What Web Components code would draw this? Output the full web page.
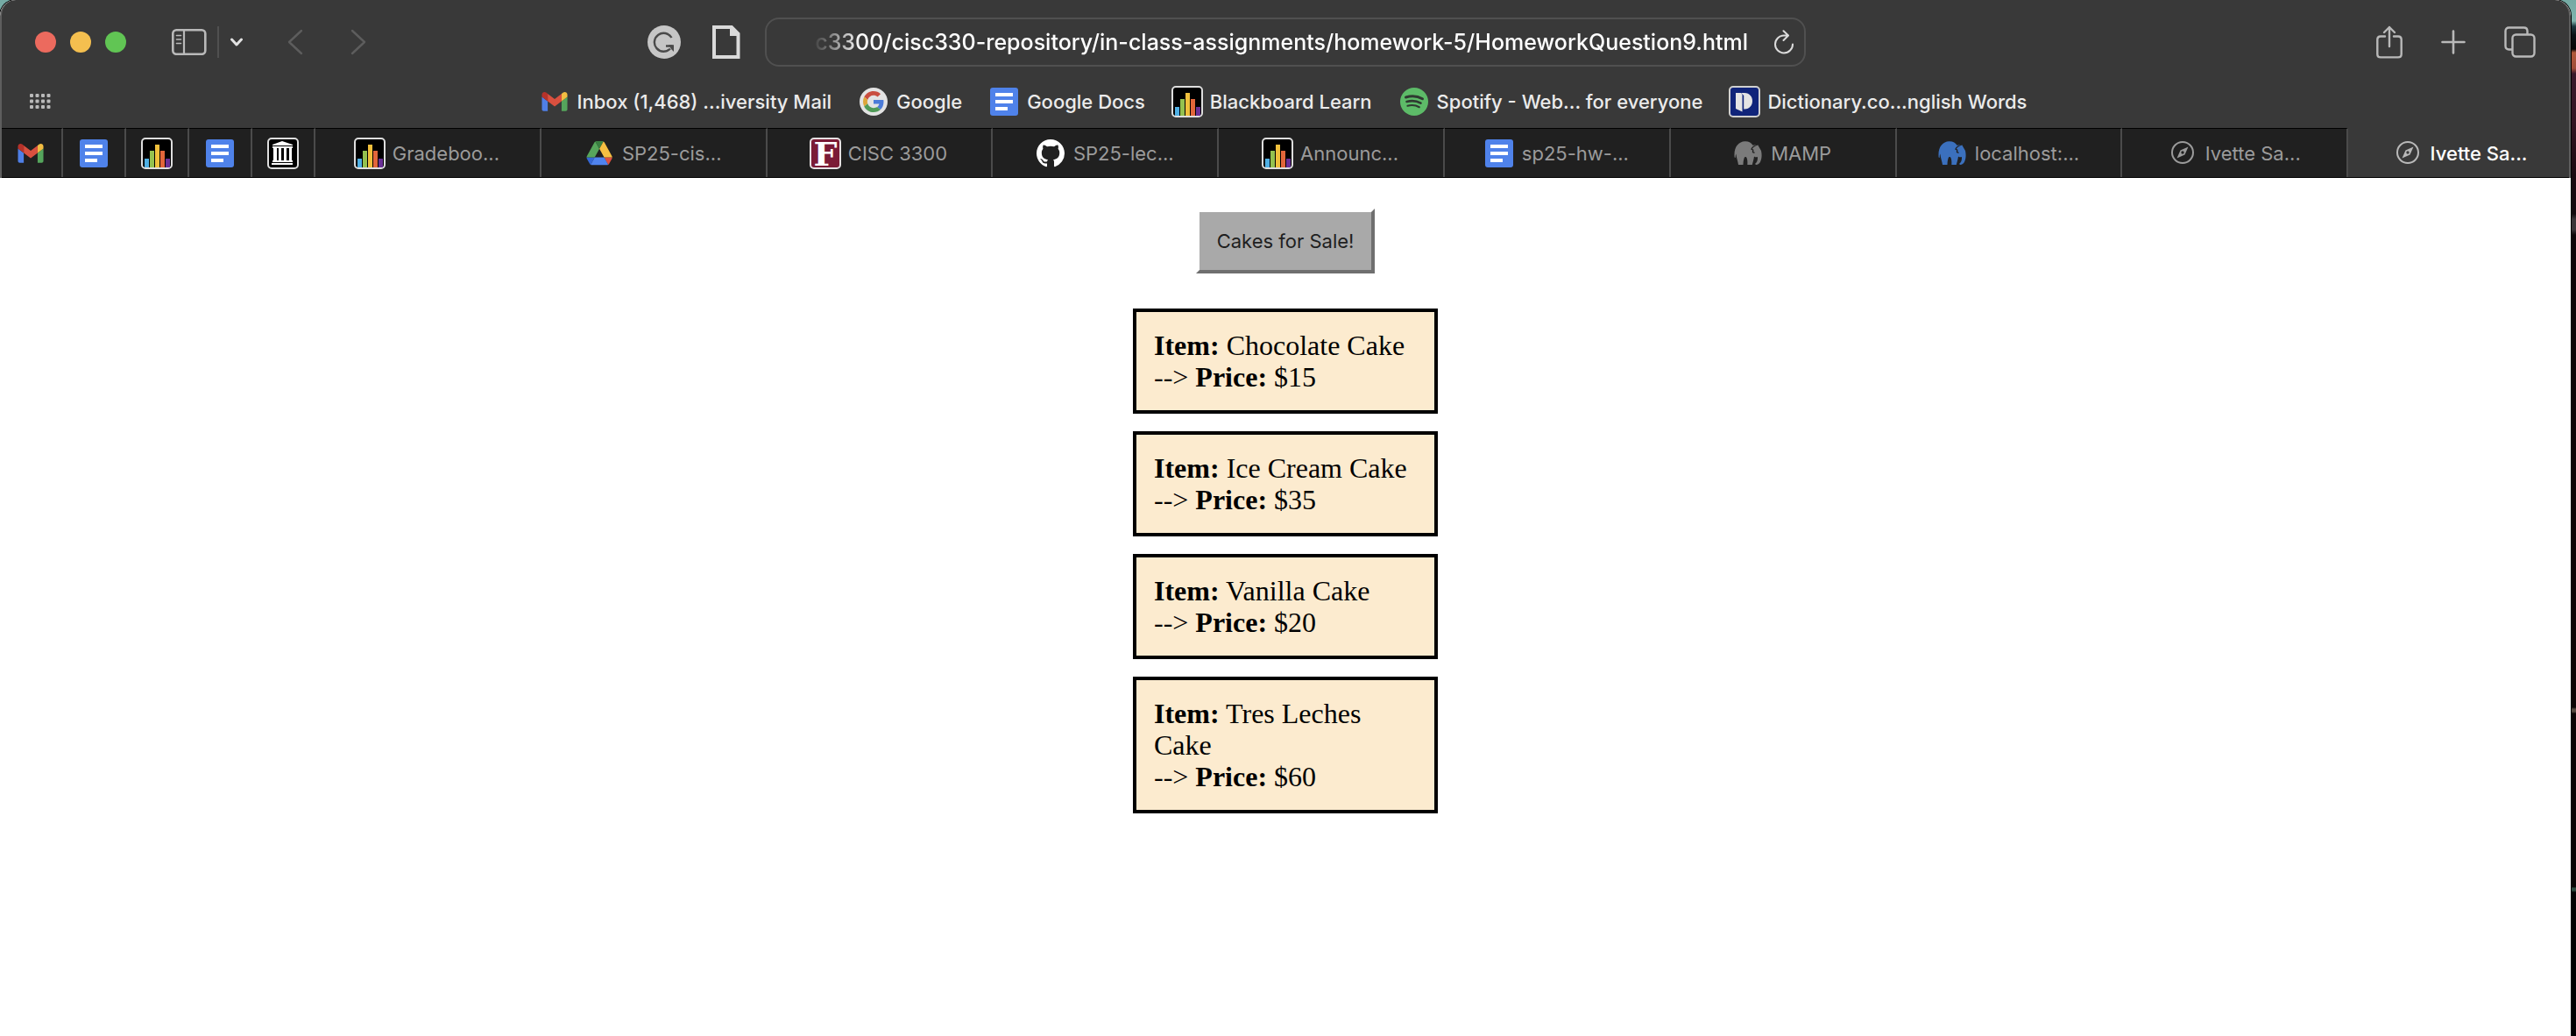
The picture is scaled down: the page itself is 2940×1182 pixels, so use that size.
<!DOCTYPE html>
<html lang="en">
<head>
<meta charset="utf-8">
<title>Ivette Sa...</title>
<style>
  html { height: 100%; }
  body {
    margin: 0;
    min-height: 100%;
    display: flex;
    overflow-x: hidden;
    background: linear-gradient(to bottom,
      #74aaa4 0, #7fb3ac 24px, #1d3a40 30px, #0a1216 40px, #050505 56px,
      #b0583a 60px, #a04c38 78px, #3a1a2c 84px, #331522 140px, #1a0a10 200px,
      #120a0e 244px, #3a3538 250px, #3a3538 262px, #0d0608 268px, #0c0404 807px,
      #55483e 809px, #55483e 812px, #0c0404 814px, #080404 1012px, #2c4a3e 1013px,
      #2c4a3e 1016px, #040303 1018px, #000 1100px);
  }
</style>
</head>
<body>
<browser-window>
  <tool-bar slot="chrome"></tool-bar>
  <favorites-bar slot="chrome">
    <bookmark-link icon="gmail">Inbox (1,468) ...iversity Mail</bookmark-link>
    <bookmark-link icon="google">Google</bookmark-link>
    <bookmark-link icon="docs">Google Docs</bookmark-link>
    <bookmark-link icon="board">Blackboard Learn</bookmark-link>
    <bookmark-link icon="spotify">Spotify - Web... for everyone</bookmark-link>
    <bookmark-link icon="dictionary">Dictionary.co...nglish Words</bookmark-link>
  </favorites-bar>
  <tab-bar slot="chrome">
    <browser-tab pinned icon="gmail" label="Mail"></browser-tab>
    <browser-tab pinned icon="docs" label="Docs"></browser-tab>
    <browser-tab pinned icon="board" label="Blackboard"></browser-tab>
    <browser-tab pinned icon="docs" label="Docs"></browser-tab>
    <browser-tab pinned icon="archive" label="Archive"></browser-tab>
    <browser-tab icon="board">Gradeboo...</browser-tab>
    <browser-tab icon="drive">SP25-cis...</browser-tab>
    <browser-tab icon="fordham">CISC 3300</browser-tab>
    <browser-tab icon="github">SP25-lec...</browser-tab>
    <browser-tab icon="board">Announc...</browser-tab>
    <browser-tab icon="docs">sp25-hw-...</browser-tab>
    <browser-tab icon="elephant" style="--icon-color:#7b7b7b">MAMP</browser-tab>
    <browser-tab icon="elephant" style="--icon-color:#3b70bd">localhost:...</browser-tab>
    <browser-tab icon="compass" style="--icon-color:#9b9b9b">Ivette Sa...</browser-tab>
    <browser-tab icon="compass" active style="--icon-color:#b9b9b9">Ivette Sa...</browser-tab>
  </tab-bar>
  <cake-shop>
    <sale-button slot="action">Cakes for Sale!</sale-button>
    <cake-card price="$15">Chocolate Cake</cake-card>
    <cake-card price="$35">Ice Cream Cake</cake-card>
    <cake-card price="$20">Vanilla Cake</cake-card>
    <cake-card price="$60">Tres Leches Cake</cake-card>
  </cake-shop>
</browser-window>

<script>
const ICONS = {
  gmail: [32, 32, `<svg viewBox="0 0 32 32"><g transform="translate(1.500 5) scale(.33) translate(-52 -42)">
    <path fill="#4f7fe6" d="M58 108h14V74L52 59v43c0 3.320 2.690 6 6 6"/><path fill="#55a55c" d="M120 108h14c3.320 0 6-2.690 6-6V59l-20 15"/>
    <path fill="#f2bd42" d="M120 48v26l20-15v-8c0-7.420-8.470-11.650-14.400-7.200"/><path fill="#d9503f" d="M72 74V48l24 18 24-18v26L96 92"/>
    <path fill="#b5322a" d="M52 51v8l20 15V48l-5.600-4.200c-5.940-4.450-14.400-.220-14.400 7.200"/></g></svg>`],
  docs: [32, 32, `<svg viewBox="0 0 32 32"><rect width="32" height="32" rx="3" fill="#4f82ea"/><path fill="#fff" d="M6 6h20v4H6zM6 14h20v4H6zM6 22h14v4H6z"/></svg>`],
  board: [36, 36, `<svg viewBox="0 0 36 36"><rect x="1" y="1" width="34" height="34" rx="4" fill="#000" stroke="#dedede" stroke-width="2"/>
    <path fill="#4fb0e4" d="M4 24h5v10H4z"/><path fill="#94c14f" d="M10 15h5v19h-5z"/><path fill="#f0c03c" d="M16 8h5v26h-5z"/><path fill="#e2663a" d="M22 15h5v19h-5z"/><path fill="#6a3096" d="M28 24h5v10h-5z"/></svg>`],
  archive: [36, 36, `<svg viewBox="0 0 36 36"><rect x="1" y="1" width="34" height="34" rx="4" fill="#000" stroke="#dedede" stroke-width="2"/>
    <path fill="#fff" d="M17 4 29 8v1H6V8zM6 10h23v2H6zM7 12h4v14H7zM13 12h3v14h-3zM19 12h3v14h-3zM25 12h3v14h-3zM6 26h23v2H6zM5 29h24v2H5z"/></svg>`],
  google: [32, 32, `<svg viewBox="0 0 32 32"><circle cx="16" cy="16" r="16" fill="#e3e3e3"/><g transform="translate(4 4) scale(.5)">
    <path fill="#c94d3f" d="M24 9.500c3.540 0 6.710 1.220 9.210 3.600l6.850-6.850C35.900 2.380 30.470 0 24 0 14.620 0 6.510 5.380 2.560 13.220l7.980 6.190C12.430 13.720 17.740 9.500 24 9.500z"/>
    <path fill="#4b7bd8" d="M46.980 24.550c0-1.570-.150-3.090-.380-4.550H24v9.020h12.940c-.580 2.960-2.260 5.480-4.780 7.180l7.730 6c4.510-4.180 7.090-10.360 7.090-17.650z"/>
    <path fill="#dca63a" d="M10.530 28.590c-.480-1.450-.760-2.990-.760-4.590s.270-3.140.760-4.590l-7.980-6.190C.920 16.460 0 20.120 0 24c0 3.880.920 7.540 2.560 10.780l7.970-6.190z"/>
    <path fill="#4f9a57" d="M24 48c6.480 0 11.930-2.130 15.890-5.810l-7.730-6c-2.150 1.450-4.920 2.300-8.160 2.300-6.260 0-11.570-4.220-13.470-9.910l-7.980 6.190C6.510 42.620 14.620 48 24 48z"/></g></svg>`],
  spotify: [32, 32, `<svg viewBox="0 0 32 32"><circle cx="16" cy="16" r="16" fill="#5dbb68"/><g fill="none" stroke="#2f3a31" stroke-linecap="round"><path stroke-width="3" d="M6.500 11c6-1.800 13.500-1.300 19 1.800"/><path stroke-width="2.600" d="M7.500 16c5.500-1.500 11.500-.900 16 1.700"/><path stroke-width="2.200" d="M8.500 20.700c4.500-1.200 9.500-.700 13.300 1.500"/></g></svg>`],
  dictionary: [36, 36, `<svg viewBox="0 0 36 36"><rect x="1" y="1" width="34" height="34" rx="4" fill="#10247a" stroke="#d0d0d0" stroke-width="2"/><path fill="#e4e4e4" d="M8 8h6l1.500 2v19.500L8 26z"/><path fill="#e4e4e4" d="M14 8h4c12 0 12 18.500 0 18.500h-.8V11z"/></svg>`],
  drive: [32, 28, `<svg viewBox="0 0 32 28"><g transform="translate(1.500 0) scale(.335 .350)">
    <path fill="#3467d6" d="m6.600 66.850 3.850 6.650c.8 1.400 1.950 2.500 3.300 3.300l13.750-23.800H0c0 1.550.4 3.100 1.200 4.500z"/><path fill="#57a55b" d="M43.650 25 29.900 1.200c-1.350.8-2.500 1.900-3.300 3.300L1.200 48.500A9.060 9.060 0 0 0 0 53h27.500z"/>
    <path fill="#dc5040" d="M73.550 76.800c1.350-.8 2.500-1.900 3.300-3.300l1.600-2.750L86.100 57.500c.8-1.400 1.200-2.950 1.200-4.500H59.800l5.850 11.500z"/><path fill="#3a7f41" d="M43.650 25 57.400 1.200C56.050.4 54.500 0 52.900 0H34.400c-1.600 0-3.150.45-4.500 1.200z"/>
    <path fill="#4f83ee" d="M59.800 53H27.500L13.750 76.800c1.350.8 2.900 1.200 4.500 1.200h50.800c1.600 0 3.150-.45 4.500-1.200z"/><path fill="#f5bf42" d="m73.400 26.500-12.700-22c-.8-1.400-1.950-2.500-3.300-3.300L43.650 25 59.800 53h27.450c0-1.550-.4-3.100-1.200-4.500z"/></g></svg>`],
  fordham: [36, 36, `<svg viewBox="0 0 36 36"><rect x="1" y="1" width="34" height="34" rx="4" fill="#7b1b36" stroke="#e6e0e2" stroke-width="2"/><text x="18" y="32" text-anchor="middle" font-family="DejaVu Serif, serif" font-weight="700" font-size="38" fill="#fff">F</text></svg>`],
  github: [32, 32, `<svg viewBox="0 0 16 16"><path fill="#fff" d="M8 0C3.580 0 0 3.580 0 8c0 3.540 2.290 6.530 5.470 7.590.4.070.550-.170.550-.380 0-.190-.010-.820-.010-1.490-2.010.370-2.530-.490-2.690-.940-.090-.230-.480-.940-.820-1.130-.280-.150-.680-.520-.010-.530.630-.010 1.080.580 1.230.820.720 1.210 1.870.870 2.330.660.070-.520.280-.870.510-1.070-1.780-.2-3.640-.890-3.640-3.950 0-.870.310-1.590.820-2.150-.080-.2-.360-1.020.080-2.120 0 0 .670-.210 2.200.820.640-.180 1.320-.270 2-.270s1.360.090 2 .270c1.530-1.040 2.200-.820 2.200-.820.440 1.100.160 1.920.080 2.120.510.560.820 1.270.820 2.150 0 3.070-1.870 3.750-3.650 3.950.290.250.540.730.540 1.480 0 1.070-.010 1.930-.010 2.200 0 .210.150.460.550.380A8.013 8.013 0 0 0 16 8c0-4.420-3.580-8-8-8z"/></svg>`],
  elephant: [32, 28, `<svg viewBox="0 0 32 28"><path fill="var(--icon-color)" d="M.6 18.500C-.5 7 5 .5 12.500.2c4.500-.1 7.500 1.600 9 4.600L27 4l4 7c1 4 .8 9-.9 12.500-1.100 2.300-3 3.700-5.300 3.500l-.6-1.200c2.300-1.600 3-4.300 2.800-7.800-1.500.6-3 .3-4-.6-.4 3.500-1.500 6.500-2.200 9.600h-5.500c.2-3 .2-6.500-1.300-8.800-1.300-.5-2 .1-2.400 1.300-.9 2.500-1 5-1.100 7.500H5C4.500 23 3 20 2.300 14.500 1.800 16 1.600 17.500 1.800 19z"/><path fill="none" stroke="#202020" stroke-width="1.300" d="M27 4c-4 1.500-6.500 3.500-7 5.200l1.800 1-.3 2.300 2 .8"/></svg>`],
  compass: [32, 28, `<svg viewBox="0 0 32 28"><circle cx="16" cy="13" r="12" fill="none" stroke="var(--icon-color)" stroke-width="2"/><path fill="var(--icon-color)" fill-rule="evenodd" d="m22.500 6.500-4 9-9 4 4-9zM16 11.300a1.700 1.700 0 1 0 0 3.400 1.700 1.700 0 0 0 0-3.400z"/></svg>`],
  sidebar: [40, 30, `<svg viewBox="0 0 40 30" fill="none" stroke="#b9b9b9"><rect x="1.300" y="1.300" width="37" height="27.500" rx="4" stroke-width="2.600"/><path stroke-width="2.200" d="M14 1v28"/><path stroke-width="1.600" stroke-linecap="round" d="M5.500 7.500h5M5.500 12h5M5.500 16.500h5"/></svg>`],
  caret: [16, 10, `<svg viewBox="0 0 16 10"><path fill="none" stroke="#e2e2e2" stroke-width="3" stroke-linecap="round" stroke-linejoin="round" d="m2.500 2 5.500 6 5.500-6"/></svg>`],
  back: [18, 30, `<svg viewBox="0 0 18 30"><path fill="none" stroke="#5d5d5d" stroke-width="2.400" stroke-linecap="round" stroke-linejoin="round" d="M16 2 2 15l14 13"/></svg>`],
  forward: [18, 30, `<svg viewBox="0 0 18 30"><path fill="none" stroke="#5d5d5d" stroke-width="2.400" stroke-linecap="round" stroke-linejoin="round" d="m2 2 14 13L2 28"/></svg>`],
  grammarly: [38, 38, `<svg viewBox="0 0 38 38"><circle cx="19" cy="19" r="19" fill="#c6c6c6"/><path fill="none" stroke="#4a4a4a" stroke-width="2.400" d="M27.500 14A10.500 10.500 0 1 0 26 26.500M21 23.500h7.500"/><path fill="#4a4a4a" d="M24 22.300h6V30l-2.500-2.500z"/></svg>`],
  page: [32, 38, `<svg viewBox="0 0 32 38"><path fill="none" stroke="#dadada" stroke-width="4" d="M2 2h20l7.500 7.500V36H2z"/><path fill="#dadada" d="M20 2v10h10z"/></svg>`],
  reload: [22, 28, `<svg viewBox="0 0 22 28"><path fill="none" stroke="#dcdcdc" stroke-width="2" stroke-linecap="round" stroke-linejoin="round" d="M15.500 6.500H11a10 10 0 1 0 10 10M10.500 1.300l5.500 5.200-5.500 5.500"/></svg>`],
  share: [30, 38, `<svg viewBox="0 0 30 38"><path fill="none" stroke="#b9b9b9" stroke-width="2.400" stroke-linecap="round" stroke-linejoin="round" d="M10 12.500H5c-2.500 0-3.700 1.200-3.700 3.700v16.500c0 2.500 1.200 3.700 3.700 3.700h20c2.500 0 3.700-1.200 3.700-3.700V16.200c0-2.500-1.200-3.700-3.700-3.700h-5M15 24V2M9 8l6-6 6 6"/></svg>`],
  plus: [28, 28, `<svg viewBox="0 0 28 28"><path stroke="#b9b9b9" stroke-width="2.600" stroke-linecap="round" d="M14 1.500v25M1.500 14h25"/></svg>`],
  overview: [36, 36, `<svg viewBox="0 0 36 36" fill="none" stroke="#b9b9b9" stroke-width="2.400"><rect x="9.500" y="9.500" width="25" height="25" rx="4"/><path d="M9 26.500H5.500c-2.500 0-4-1.500-4-4v-17c0-2.500 1.500-4 4-4h17c2.500 0 4 1.500 4 4V9"/></svg>`],
  dots: [24, 18, `<svg viewBox="0 0 24 18" fill="#b9b9b9">${[0, 6.500, 13, 19.500].map(x => [0, 6.500, 13].map(y => `<rect x="${x}" y="${y}" width="4" height="4" rx="1"/>`).join('')).join('')}</svg>`]
};

function define(name, css, html, setup) {
  const template = document.createElement('template');
  template.innerHTML = `<style>*,:host{box-sizing:border-box}${css}</style>${html}`;
  customElements.define(name, class extends HTMLElement {
    connectedCallback() {
      if (this.shadowRoot) return;
      const root = this.attachShadow({ mode: 'open' });
      root.append(template.content.cloneNode(true));
      if (setup) setup(this, root);
    }
  });
}

const BUTTON = 'button{display:flex;align-items:center;justify-content:center;margin:0;padding:0;border:0;background:none;font:inherit;color:inherit}';

define('ui-icon', ':host{display:block;flex:none}span,svg{display:block;width:100%;height:100%}', '<span></span>', (host, root) => {
  const [w, h, svg] = ICONS[host.getAttribute('name')];
  host.style.width = w + 'px';
  host.style.height = h + 'px';
  root.querySelector('span').innerHTML = svg;
});

define('browser-window', `
  :host{display:flex;flex-direction:column;flex:1;min-width:0;margin-right:6px;border-radius:18px 18px 0 0;overflow:hidden;background:#fff;box-shadow:0 0 0 1px #000}
  header{background:#393939;border:solid #5e5e5e;border-width:0 2px;border-radius:18px 18px 0 0;overflow:hidden;font-family:Inter,sans-serif}
  main{flex:1}`,
  '<header><slot name="chrome"></slot></header><main><slot></slot></main>');

define('traffic-lights', `
  :host{display:flex;gap:16px}${BUTTON}
  button{width:24px;height:24px;border-radius:50%}
  .close{background:#ec6a5e}.min{background:#f4bf4f}.max{background:#61c554}`,
  '<button class="close" aria-label="Close"></button><button class="min" aria-label="Minimize"></button><button class="max" aria-label="Zoom"></button>');

define('address-field', `
  :host{display:flex;align-items:center;min-width:0;height:56px;padding:0 12px 0 52px;gap:30px;border:2px solid #505050;border-radius:16px}
  ${BUTTON}
  input{flex:1;min-width:0;padding:0;border:0;outline:0;background:none;color:#fff;font:500 25px/32px Inter,sans-serif;text-align:right;
    -webkit-mask-image:linear-gradient(to right,transparent,#000 56px);mask-image:linear-gradient(to right,transparent,#000 56px)}`,
  '<input type="text" aria-label="Address" value="c3300/cisc330-repository/in-class-assignments/homework-5/HomeworkQuestion9.html"><button aria-label="Reload"><ui-icon name="reload"></ui-icon></button>');

define('tool-bar', `
  :host{display:grid;grid-template-columns:1fr minmax(0,1188px) 1fr;align-items:center;gap:28px;height:96px;padding:0 38px}
  ${BUTTON}
  .side{display:flex;align-items:center}
  .panel{margin-left:52px}
  .divider{width:2px;height:36px;margin:0 12px;background:#505050}
  .nav{display:flex;gap:54px;margin-left:50px}
  .extensions{display:flex;gap:36px;margin-left:auto}
  .actions{justify-content:flex-end;gap:44px}`,
  `<div class="side"><traffic-lights></traffic-lights>
    <button class="panel" aria-label="Sidebar"><ui-icon name="sidebar"></ui-icon></button><span class="divider"></span>
    <button aria-label="Tab groups"><ui-icon name="caret"></ui-icon></button>
    <div class="nav"><button aria-label="Back"><ui-icon name="back"></ui-icon></button><button aria-label="Forward"><ui-icon name="forward"></ui-icon></button></div>
    <div class="extensions"><button aria-label="Grammarly"><ui-icon name="grammarly"></ui-icon></button><button aria-label="Page"><ui-icon name="page"></ui-icon></button></div></div>
  <address-field></address-field>
  <div class="side actions"><button aria-label="Share"><ui-icon name="share"></ui-icon></button><button aria-label="New tab"><ui-icon name="plus"></ui-icon></button><button aria-label="Tab overview"><ui-icon name="overview"></ui-icon></button></div>`);

define('favorites-bar', `
  :host{display:grid;grid-template-columns:1fr auto 1fr;align-items:center;height:50px;padding:0 36px 10px 32px}
  ${BUTTON}
  nav{display:flex;gap:32px}`,
  '<div><button aria-label="Favorites"><ui-icon name="dots"></ui-icon></button></div><nav><slot></slot></nav>');

const showIcon = (host, root) => {
  root.querySelector('.icon').innerHTML = `<ui-icon name="${host.getAttribute('icon')}"></ui-icon>`;
};

define('bookmark-link', `
  :host{display:block}
  a{display:flex;align-items:center;gap:10px;color:#ebebeb;text-decoration:none;white-space:nowrap;font-size:22px;line-height:28px;font-weight:500}
  .icon{display:flex;align-items:center;justify-content:center;width:32px;height:36px}`,
  '<a href="#"><span class="icon"></span><span><slot></slot></span></a>', showIcon);

define('tab-bar', ':host{display:flex;height:57px;margin-left:-2px;margin-right:-6px;border-bottom:1px solid #000}', '<slot></slot>');

define('browser-tab', `
  :host{display:block;flex:1 1 0;min-width:0;border-top:1px solid #000;border-right:2px solid #4b4b4b;background:#202020;color:#9b9b9b}
  :host([pinned]){flex:0 0 72px}
  :host([active]){border-color:transparent;background:none;color:#fff;font-weight:500}
  ${BUTTON}
  button{width:100%;height:100%;gap:10px;white-space:nowrap;font-size:22px;line-height:28px}
  .icon{display:flex;justify-content:center;width:32px}
  :host([pinned]) .text{display:none}`,
  '<button role="tab"><span class="icon"></span><span class="text"><slot></slot></span></button>',
  (host, root) => {
    showIcon(host, root);
    if (host.hasAttribute('label')) root.querySelector('button').setAttribute('aria-label', host.getAttribute('label'));
  });

define('cake-shop', `
  :host{display:flex;flex-direction:column;align-items:center;padding:35px 16px 40px}
  section{display:flex;flex-direction:column;gap:20px;width:348px;max-width:100%;margin-top:40px}`,
  '<slot name="action"></slot><section><slot></slot></section>');

define('sale-button', `
  :host{display:block}
  button{display:block;padding:20px;border:4px solid;border-color:#fff #6f6f6f #6f6f6f #fff;border-radius:0;background:#a9a9a9;color:#1f1f1f;font:400 22px/26px Inter,sans-serif}`,
  '<button type="button"><slot></slot></button>');

define('cake-card', `
  :host{display:block;padding:20px;border:4px solid #000;background:#fcebcf;color:#000;font:32px/36px "Liberation Serif",serif}`,
  '<b>Item:</b> <slot></slot><br>--&gt; <b>Price:</b> <span class="price"></span>',
  (host, root) => { root.querySelector('.price').textContent = host.getAttribute('price'); });
</script>
</body>
</html>
